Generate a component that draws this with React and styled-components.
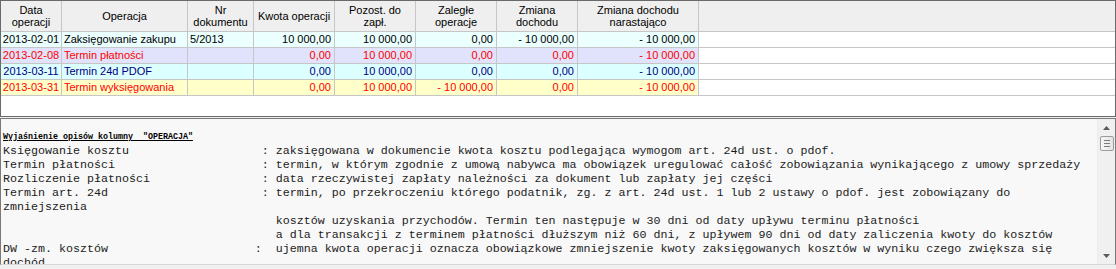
import React from 'react'
import styled, { createGlobalStyle } from 'styled-components'

const GlobalStyle = createGlobalStyle`
  html, body {
    margin: 0;
    padding: 0;
    background: #f0f0f0;
  }
  body {
    width: 1116px;
    height: 269px;
    overflow: hidden;
    font-family: "Liberation Sans", Arial, sans-serif;
  }
`

const COLS = '61px 126px 66px 81px 81px 81px 81px 121px 1fr'

const TONES = {
  posted: { bg: '#ebffff', fg: '#000000' },
  payment: { bg: '#e0e3fb', fg: '#ff0000' },
  deadline: { bg: '#dcffff', fg: '#000080' },
  writeoff: { bg: '#ffffca', fg: '#ff0000' },
}

const columns = [
  { title: ['Data', 'operacji'], align: 'center' },
  { title: ['Operacja'], align: 'left' },
  { title: ['Nr', 'dokumentu'], align: 'left' },
  { title: ['Kwota operacji'], align: 'right' },
  { title: ['Pozost. do', 'zapł.'], align: 'right' },
  { title: ['Zaległe', 'operacje'], align: 'right' },
  { title: ['Zmiana', 'dochodu'], align: 'right' },
  { title: ['Zmiana dochodu', 'narastająco'], align: 'right' },
]

const rows = [
  { tone: 'posted', cells: ['2013-02-01', 'Zaksięgowanie zakupu', '5/2013', '10 000,00', '10 000,00', '0,00', '- 10 000,00', '- 10 000,00'] },
  { tone: 'payment', cells: ['2013-02-08', 'Termin płatności', '', '0,00', '10 000,00', '0,00', '0,00', '- 10 000,00'] },
  { tone: 'deadline', cells: ['2013-03-11', 'Termin 24d PDOF', '', '0,00', '10 000,00', '0,00', '0,00', '- 10 000,00'] },
  { tone: 'writeoff', cells: ['2013-03-31', 'Termin wyksięgowania', '', '0,00', '10 000,00', '- 10 000,00', '0,00', '- 10 000,00'] },
]

const legend = [
  'Księgowanie kosztu                   : zaksięgowana w dokumencie kwota kosztu podlegająca wymogom art. 24d ust. o pdof.',
  'Termin płatności                     : termin, w którym zgodnie z umową nabywca ma obowiązek uregulować całość zobowiązania wynikającego z umowy sprzedaży',
  'Rozliczenie płatności                : data rzeczywistej zapłaty należności za dokument lub zapłaty jej części',
  'Termin art. 24d                      : termin, po przekroczeniu którego podatnik, zg. z art. 24d ust. 1 lub 2 ustawy o pdof. jest zobowiązany do',
  'zmniejszenia',
  '                                       kosztów uzyskania przychodów. Termin ten następuje w 30 dni od daty upływu terminu płatności',
  '                                       a dla transakcji z terminem płatności dłuższym niż 60 dni, z upływem 90 dni od daty zaliczenia kwoty do kosztów',
  'DW -zm. kosztów                     :  ujemna kwota operacji oznacza obowiązkowe zmniejszenie kwoty zaksięgowanych kosztów w wyniku czego zwiększa się',
  'dochód',
]

const App = () => {
  return (
    <>
      <GlobalStyle />
      <Window>
        <Grid>
          <HeaderRow>
            {columns.map(({ title }, i) => (
              <HeadCell key={i}>
                {title.map((line) => (
                  <span key={line}>{line}</span>
                ))}
              </HeadCell>
            ))}
            <HeadCell $last />
          </HeaderRow>
          {rows.map(({ tone, cells }) => (
            <Row key={cells[0]} $tone={tone}>
              {cells.map((value, i) => (
                <Cell key={i} $tone={tone} $align={columns[i].align}>
                  {value}
                </Cell>
              ))}
              <Filler />
            </Row>
          ))}
        </Grid>

        <Panel>
          <Notes>
            <NotesTitle>Wyjaśnienie opisów kolumny  "OPERACJA"</NotesTitle>
            {legend.map((line, i) => (
              <NoteLine key={i}>{line}</NoteLine>
            ))}
          </Notes>
          <ScrollBar>
            <ArrowButton>
              <svg width="7" height="4" viewBox="0 0 7 4">
                <path d="M0 4 L3.5 0 L7 4 Z" fill="#5a5a5a" />
              </svg>
            </ArrowButton>
            <Thumb>
              <Grip />
              <Grip />
              <Grip />
            </Thumb>
            <Track />
            <ArrowButton>
              <svg width="7" height="4" viewBox="0 0 7 4">
                <path d="M0 0 L7 0 L3.5 4 Z" fill="#5a5a5a" />
              </svg>
            </ArrowButton>
          </ScrollBar>
        </Panel>
      </Window>
    </>
  )
}

export default App

const Window = styled.div`
    width: 1116px;
    display: flex;
    flex-direction: column;
    gap: 1px;
`

const Grid = styled.div`
    box-sizing: border-box;
    height: 117px;
    border: 1px solid #6a6a6a;
    background: #ffffff;
    overflow: hidden;
    font-size: 11px;
`

const HeaderRow = styled.div`
    display: grid;
    grid-template-columns: ${COLS};
    box-sizing: border-box;
    height: 31px;
    border-bottom: 1px solid #c6c6c6;
    background: #efefef;
`

const HeadCell = styled.div`
    display: flex;
    flex-direction: column;
    align-items: center;
    justify-content: center;
    line-height: 12px;
    color: #000;
    border-right: 1px solid ${(p) => (p.$last ? 'transparent' : '#c6c6c6')};
    white-space: nowrap;
`

const Row = styled.div`
    display: grid;
    grid-template-columns: ${COLS};
    box-sizing: border-box;
    height: 16px;
    border-bottom: 1px solid #c6c6c6;
    color: ${(p) => TONES[p.$tone].fg};
`

const Cell = styled.div`
    background: ${(p) => TONES[p.$tone].bg};
    border-right: 1px solid #c6c6c6;
    line-height: 15px;
    text-align: ${(p) => p.$align};
    padding: ${(p) => (p.$align === 'right' ? '0 3px 0 0' : p.$align === 'left' ? '0 0 0 2px' : '0')};
    white-space: nowrap;
    overflow: hidden;
`

const Filler = styled.div`
    background: #ffffff;
`

const Panel = styled.div`
    box-sizing: border-box;
    height: 147px;
    display: flex;
    border: 1px solid #7a7a7a;
    border-bottom-color: #d6d6d6;
    background: #f8f8f8;
    overflow: hidden;
`

const Notes = styled.div`
    flex: 1;
    padding: 11px 0 0 2px;
    overflow: hidden;
    color: #1c1c1c;
`

const NotesTitle = styled.div`
    font-family: "Liberation Mono", "Courier New", monospace;
    font-size: 8.33px;
    font-weight: 700;
    line-height: 14px;
    text-decoration: underline;
    white-space: pre;
    color: #000;
`

const NoteLine = styled.div`
    font-family: "Liberation Mono", "Courier New", monospace;
    font-size: 11.67px;
    line-height: 14px;
    white-space: pre;
`

const ScrollBar = styled.div`
    width: 17px;
    display: flex;
    flex-direction: column;
    background: #f0f0f0;
    border-left: 1px solid #ececec;
`

const ArrowButton = styled.div`
    height: 17px;
    display: flex;
    align-items: center;
    justify-content: center;
    flex-shrink: 0;
`

const Thumb = styled.div`
    box-sizing: border-box;
    height: 15px;
    margin: 0 1px 0 2px;
    border: 1px solid #9c9c9c;
    border-radius: 2px;
    background: linear-gradient(to right, #f6f6f6, #e4e4e4);
    display: flex;
    flex-direction: column;
    align-items: center;
    justify-content: center;
    gap: 2px;
`

const Grip = styled.div`
    width: 6px;
    height: 1px;
    background: #7c7c7c;
`

const Track = styled.div`
    flex: 1;
`
